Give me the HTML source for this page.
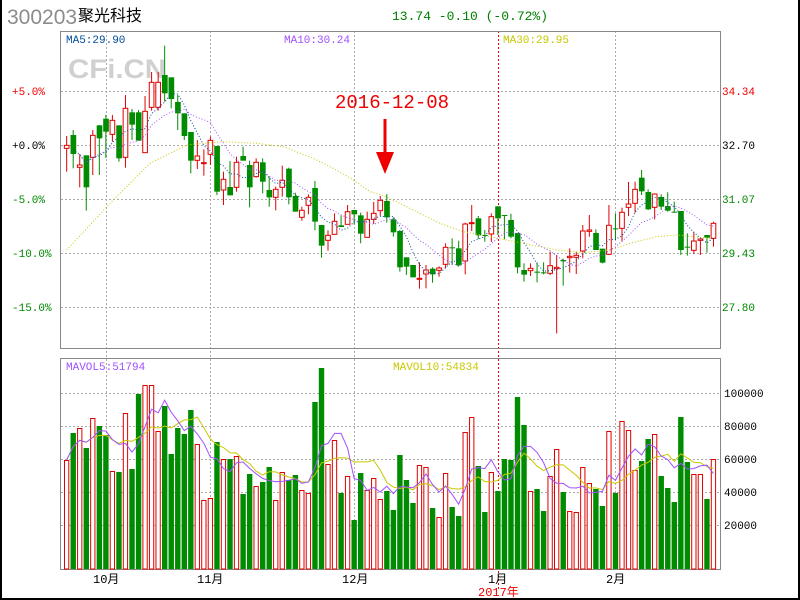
<!DOCTYPE html>
<html><head><meta charset="utf-8"><style>
html,body{margin:0;padding:0;background:#fff}
#w{position:relative;width:798px;height:598px;border-left:2px solid #000;border-right:0;border-bottom:2px solid #000;background:#fff;overflow:hidden}
#rb{position:absolute;left:796px;top:0;width:2px;height:600px;background:#000}
svg{position:absolute;left:-2px;top:0}
text{font-family:"Liberation Mono","Noto Sans CJK SC",monospace}
</style></head><body><div id="w">
<svg id="s" width="800" height="600" viewBox="0 0 800 600">
<text x="7" y="24" font-size="21" fill="#8c8c8c" style="font-family:'Liberation Sans',sans-serif">300203</text>
<text x="78" y="21" font-size="16" fill="#000" style="font-family:'Liberation Sans','Noto Sans CJK SC',sans-serif">聚光科技</text>
<text x="392" y="20" font-size="13" fill="#008000">13.74 -0.10 (-0.72%)</text>
<g stroke="#aaa" stroke-dasharray="2 2" stroke-width="1">
<line x1="61" x2="720" y1="91.5" y2="91.5"/><line x1="61" x2="720" y1="145.5" y2="145.5"/><line x1="61" x2="720" y1="199.5" y2="199.5"/><line x1="61" x2="720" y1="253.5" y2="253.5"/><line x1="61" x2="720" y1="307.5" y2="307.5"/>
<line x1="61" x2="720" y1="393.5" y2="393.5"/><line x1="61" x2="720" y1="426.5" y2="426.5"/><line x1="61" x2="720" y1="459.5" y2="459.5"/><line x1="61" x2="720" y1="492.5" y2="492.5"/><line x1="61" x2="720" y1="525.5" y2="525.5"/>
<line x1="106.5" x2="106.5" y1="31" y2="569"/><line x1="210.5" x2="210.5" y1="31" y2="569"/><line x1="354.5" x2="354.5" y1="31" y2="569"/><line x1="615.5" x2="615.5" y1="31" y2="569"/>
</g>
<line x1="498.5" x2="498.5" y1="31" y2="590" stroke="#e00" stroke-dasharray="2 2"/>
<rect x="60.5" y="31.5" width="660" height="317" fill="none" stroke="#888"/>
<rect x="60.5" y="358.5" width="660" height="211" fill="none" stroke="#888"/>
<text x="68" y="78" font-size="27" font-weight="bold" fill="#d0d0d0" textLength="98" lengthAdjust="spacingAndGlyphs" style="font-family:'Liberation Sans',sans-serif">CFi.CN</text>
<text x="66" y="43" font-size="11" fill="#004c99">MA5:29.90</text>
<text x="284" y="43" font-size="11" fill="#a050ff">MA10:30.24</text>
<text x="503" y="43" font-size="11" fill="#c8c800">MA30:29.95</text>
<text x="66" y="370" font-size="11" fill="#a050ff">MAVOL5:51794</text>
<text x="393" y="370" font-size="11" fill="#c8c800">MAVOL10:54834</text>
<g font-size="11">
<text x="12" y="95" fill="#e00">+5.0%</text><text x="12" y="149" fill="#000">+0.0%</text><text x="12" y="203" fill="#080">-5.0%</text><text x="12" y="257" fill="#080">-10.0%</text><text x="12" y="311" fill="#080">-15.0%</text>
<text x="722" y="95" fill="#e00">34.34</text><text x="722" y="149" fill="#000">32.70</text><text x="722" y="203" fill="#080">31.07</text><text x="722" y="257" fill="#080">29.43</text><text x="722" y="311" fill="#080">27.80</text>
<text x="724" y="397" fill="#000">100000</text><text x="724" y="430" fill="#000">80000</text><text x="724" y="463" fill="#000">60000</text><text x="724" y="496" fill="#000">40000</text><text x="724" y="529" fill="#000">20000</text>
</g>
<g font-size="12" fill="#000" style="font-family:'Liberation Sans','Noto Sans CJK SC',sans-serif">
<text x="93" y="583">10月</text><text x="197" y="583">11月</text><text x="342" y="583">12月</text><text x="488" y="583">1月</text><text x="606" y="583">2月</text>
<text x="478" y="596" fill="#e00">2017年</text></g>
<text x="335" y="108" font-size="19" fill="#e00" style="font-family:'Liberation Mono',monospace">2016-12-08</text>
<line x1="385" y1="119" x2="385" y2="160" stroke="#e00" stroke-width="3"/>
<polygon points="376,152 394,152 385,174" fill="#e00"/>
<g id="cd" transform="translate(50,30) scale(0.33333)"></g>
<g id="vb"></g>
</svg><div id="rb"></div></div>
<script>
var C=[["R",346,355,318,425],["G",315,372,300,415],["R",405,412,372,472],["G",376,472,376,542],["R",316,382,300,435],["G",286,325,285,435],["G",266,305,255,384],["R",271,313,255,335],["G",286,385,286,395],["R",235,382,195,413],["G",247,284,237,330],["G",247,332,240,332],["R",244,368,198,368],["R",157,232,126,242],["R",157,232,126,242],["G",135,190,47,215],["G",142,207,142,235],["G",216,250,195,300],["G",250,318,250,330],["G",306,392,306,430],["R",378,391,330,417],["R",398,400,358,437],["R",331,373,320,405],["G",348,485,348,495],["R",448,480,425,525],["G",471,496,393,496],["R",397,472,380,485],["G",378,392,350,392],["G",405,472,392,532],["R",397,440,385,443],["G",397,455,385,490],["G",480,502,440,530],["R",478,502,470,541],["R",451,472,407,500],["G",416,502,413,523],["G",498,545,488,545],["R",541,562,530,572],["R",502,526,493,553],["G",474,575,453,601],["G",585,647,585,683],["R",616,631,601,662],["R",574,613,550,613],["G",586,591,556,591],["R",545,583,525,583],["G",540,553,540,583],["G",556,611,548,640],["R",568,622,545,622],["R",550,568,516,582],["R",511,542,498,557],["G",513,562,492,578],["G",568,607,562,620],["G",603,712,600,725],["G",682,710,682,735],["G",705,742,705,742],["R",745,746,697,776],["R",720,732,705,775],["G",716,733,712,758],["R",714,721,709,740],["R",652,703,640,715],["G",652,655,625,705],["G",655,706,632,710],["R",582,693,578,733],["R",578,580,525,603],["G",565,616,558,627],["G",615,618,600,635],["R",560,612,550,636],["G",529,565,529,615],["G",555,557,555,628],["G",570,620,551,625],["G",609,712,609,730],["G",720,734,700,755],["R",715,722,700,738],["G",725,728,697,757],["G",727,728,697,733],["R",707,730,665,735],["R",712,716,675,910],["G",690,694,686,767],["R",679,683,655,728],["R",676,682,665,732],["R",603,663,585,685],["R",600,604,555,620],["G",609,660,598,660],["G",656,698,656,700],["R",586,673,525,675],["G",595,596,550,630],["R",547,595,533,635],["R",522,532,456,558],["R",478,520,455,548],["G",443,484,420,495],["G",486,538,478,540],["R",492,532,490,568],["G",501,530,493,540],["G",528,542,487,545],["G",545,548,515,548],["G",543,660,543,675],["G",650,652,610,677],["R",633,661,605,672],["R",627,631,625,675],["G",615,623,615,668],["R",580,625,575,650]];
var V=[460,433,428,448,418,426,435,471,472,413,469,394,385,385,431,406,454,428,434,410,444,500,498,442,459,459,456,494,474,486,482,467,500,472,480,475,490,493,402,368,464,440,493,476,520,473,490,478,499,491,510,455,480,503,465,467,508,517,473,507,516,432,417,466,512,472,491,459,460,397,425,491,489,511,476,449,492,511,512,467,483,489,506,431,493,421,430,470,461,439,434,476,488,502,417,462,474,474,499,459];
var cd=document.getElementById("cd"),vb=document.getElementById("vb"),h="";
var closes=[];
C.forEach(function(c,i){var x=50+19.6*i,col=c[0]=="R"?"#e00000":"#008c00";closes.push(c[0]=="R"?c[1]:c[2]);
h+='<line x1="'+x+'" x2="'+x+'" y1="'+c[3]+'" y2="'+c[4]+'" stroke="'+col+'" stroke-width="3"/>';
var bh=Math.max(c[2]-c[1],3);
if(c[0]=="R")h+='<rect x="'+(x-7)+'" y="'+c[1]+'" width="14" height="'+bh+'" fill="#fff" stroke="'+col+'" stroke-width="3"/>';
else h+='<rect x="'+(x-8)+'" y="'+c[1]+'" width="17" height="'+bh+'" fill="'+col+'"/>';});
function ma(a,n){var r=[];for(var i=0;i<a.length;i++){var s=0,k=0;for(var j=Math.max(0,i-n+1);j<=i;j++){s+=a[j];k++}r.push(s/k)}return r}
function pl(a,xf,col,sw,da,st){var p=a.slice(st||0).map(function(v,i){return xf(i+(st||0))+","+v}).join(" ");return '<polyline points="'+p+'" fill="none" stroke="'+col+'" stroke-width="'+sw+'"'+(da?' stroke-dasharray="'+da+'"':'')+'/>'}
var m30=[[50,660],[190,510],[300,400],[410,345],[520,335],[620,340],[700,350],[790,385],[850,415],[910,450],[960,485],[1000,497],[1050,520],[1100,545],[1170,580],[1240,605],[1320,620],[1420,640],[1520,660],[1600,668],[1680,660],[1740,640],[1820,620],[1880,615],[1980,625]];
h+='<polyline points="'+m30.map(function(p){return p.join(",")}).join(" ")+'" fill="none" stroke="#c8c800" stroke-width="3" stroke-dasharray="3 6"/>';
var x4=function(i){return 50+19.6*i};
h+=pl(ma(closes,10),x4,"#a050ff",3,"3 6",2);
h+=pl(ma(closes,5),x4,"#004c99",3,"3 6",1);
cd.innerHTML=h;
var g="",hs=V.map(function(t){return 569-t});
V.forEach(function(t,i){var x=50+(42+19.6*i)/3;
if(C[i][0]=="R")g+='<rect x="'+(x+0.5)+'" y="'+(t+0.5)+'" width="4.3" height="'+(569-t-0.5)+'" fill="#fff" stroke="#e00000"/>';
else g+='<rect x="'+x+'" y="'+t+'" width="5.4" height="'+(569-t)+'" fill="#008c00"/>';});
var xv=function(i){return 50+(50+19.6*i)/3};
g+=pl(ma(hs,10).map(function(v){return 569-v}),xv,"#c8c800",1,null,0);
g+=pl(ma(hs,5).map(function(v){return 569-v}),xv,"#a050ff",1,null,0);
vb.innerHTML=g;
</script>
</body></html>
